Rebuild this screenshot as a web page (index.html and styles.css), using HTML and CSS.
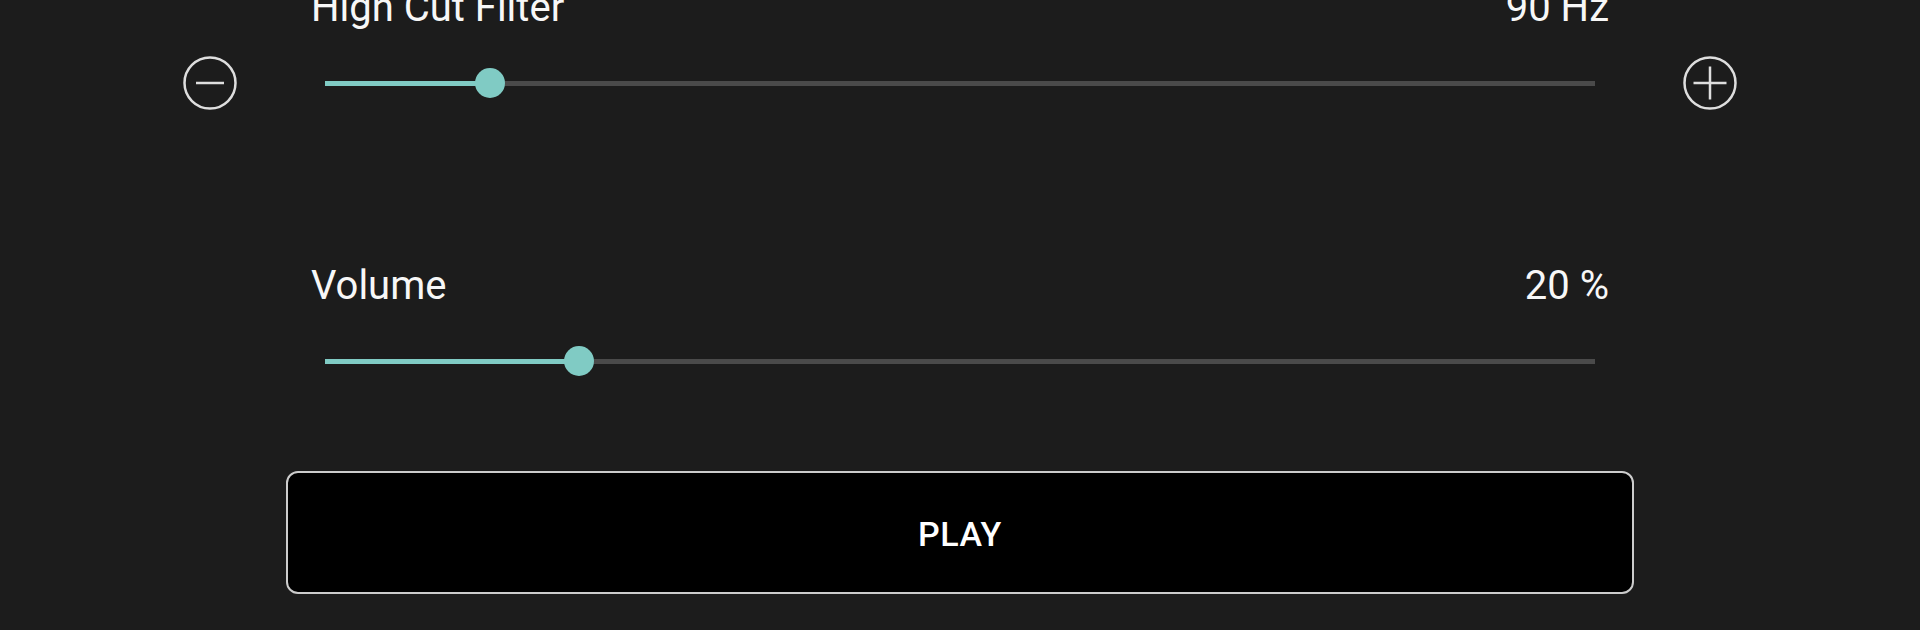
FILE: index.html
```html
<!DOCTYPE html>
<html lang="en">
<head>
  <meta charset="UTF-8" />
  <meta name="viewport" content="width=device-width, initial-scale=1.0"/>
  <title>Noise Generator</title>
  <link rel="stylesheet" href="styles.css">
</head>
<body>
  <main class="controls">
    <section class="control">
      <div class="label-row">
        <span>High Cut Filter</span>
        <span>90 Hz</span>
      </div>
      <button class="step minus" aria-label="Decrease">
        <svg width="54" height="54" viewBox="0 0 54 54">
          <circle cx="27" cy="27" r="25.5" />
          <line x1="13" y1="27" x2="41" y2="27" />
        </svg>
      </button>
      <div class="slider" role="slider" aria-valuenow="13">
        <div class="track">
          <div class="fill" style="width: 13%"></div>
          <div class="thumb" style="left: 13%"></div>
        </div>
      </div>
      <button class="step plus" aria-label="Increase">
        <svg width="54" height="54" viewBox="0 0 54 54">
          <circle cx="27" cy="27" r="25.5" />
          <line x1="10.5" y1="27" x2="43.5" y2="27" />
          <line x1="27" y1="10.5" x2="27" y2="43.5" />
        </svg>
      </button>
    </section>

    <section class="control">
      <div class="label-row">
        <span>Volume</span>
        <span>20 %</span>
      </div>
      <div class="slider" role="slider" aria-valuenow="20">
        <div class="track">
          <div class="fill" style="width: 20%"></div>
          <div class="thumb" style="left: 20%"></div>
        </div>
      </div>
    </section>

    <button class="play">PLAY</button>
  </main>
</body>
</html>
```

FILE: styles.css
```css
:root {
  --bg: #1c1c1c;
  --text: #f7f7f7;
  --teal: #80cbc4;
  --rail: #4a4a4a;
  --icon: #dedede;
}

body {
  margin: 0;
  background: var(--bg);
  color: var(--text);
  font-family: Roboto, "Noto Sans", sans-serif;
  height: 630px;
  overflow: hidden;
}

.controls {
  display: flex;
  flex-direction: column;
  align-items: center;
  margin-top: -16px;
}

.control {
  display: grid;
  grid-template-columns: 54px 1298px 54px;
  column-gap: 74px;
  align-items: center;
  margin-bottom: 128px;
}

.control:last-of-type {
  margin-bottom: 59px;
}

.label-row {
  grid-column: 2;
  display: flex;
  justify-content: space-between;
  font-size: 40px;
  line-height: 48px;
}

.step {
  padding: 0;
  border: none;
  background: none;
  width: 54px;
  height: 54px;
  cursor: pointer;
}

.step svg {
  display: block;
  fill: none;
  stroke: var(--icon);
  stroke-width: 2.5;
}

.minus { grid-column: 1; }
.plus { grid-column: 3; }

.slider {
  grid-column: 2;
  height: 102px;
  padding: 0 14px;
  display: flex;
  align-items: center;
}

.track {
  position: relative;
  flex: 1;
  height: 5px;
  background: var(--rail);
}

.fill {
  height: 100%;
  background: var(--teal);
}

.thumb {
  position: absolute;
  top: 50%;
  width: 30px;
  height: 30px;
  border-radius: 50%;
  background: var(--teal);
  transform: translate(-50%, -50%);
}

.play {
  width: 1348px;
  height: 123px;
  padding: 3px 0 0;
  background: #000;
  color: #fff;
  border: 2px solid #cccccc;
  border-radius: 12px;
  font-family: Roboto, sans-serif;
  font-size: 34px;
  font-weight: 500;
  letter-spacing: 0.5px;
  cursor: pointer;
}
```
